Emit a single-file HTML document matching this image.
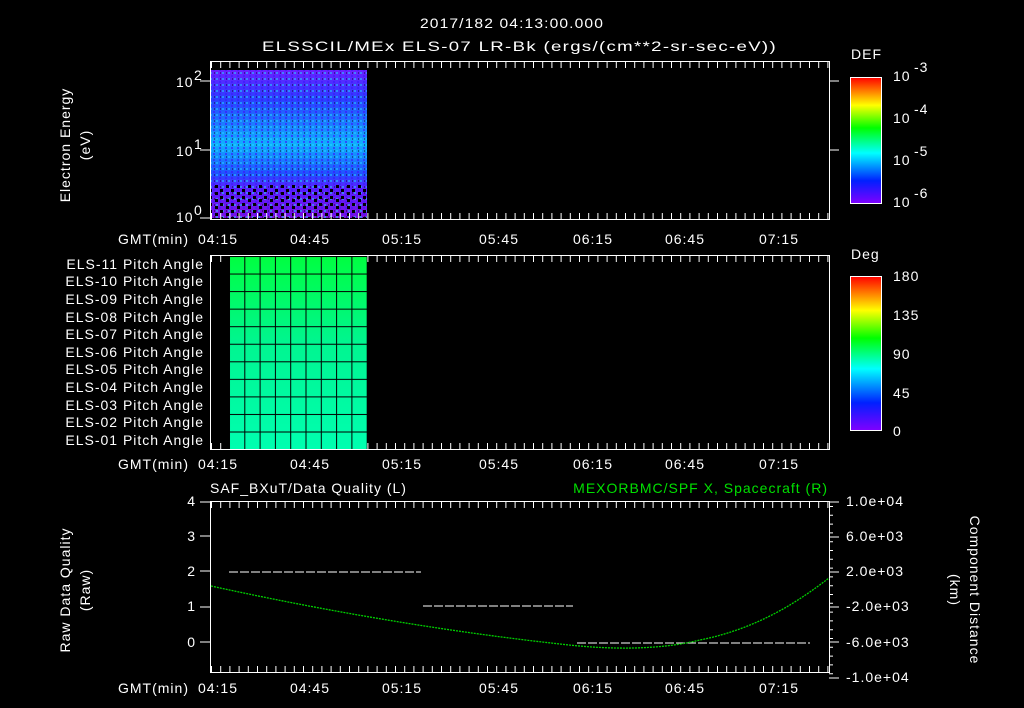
<!DOCTYPE html>
<html><head><meta charset="utf-8"><style>
html,body{margin:0;padding:0;background:#000;}
svg{display:block}
text{font-family:"Liberation Sans",sans-serif;fill:#fff;font-size:14px;letter-spacing:1px}
</style></head><body>
<svg width="1024" height="708" viewBox="0 0 1024 708" xmlns="http://www.w3.org/2000/svg">
<defs>
<linearGradient id="spec" x1="0" y1="0" x2="0" y2="1">
<stop offset="0" stop-color="#6a1fff"/><stop offset="0.2" stop-color="#2a40ff"/>
<stop offset="0.5" stop-color="#10b0ff"/><stop offset="0.7" stop-color="#2050ff"/>
<stop offset="0.8" stop-color="#5a20ff"/><stop offset="1" stop-color="#7a10e0"/>
</linearGradient>
<linearGradient id="cb1" x1="0" y1="0" x2="0" y2="1">
<stop offset="0" stop-color="#ff0000"/><stop offset="0.22" stop-color="#ffff00"/>
<stop offset="0.4" stop-color="#00ff00"/><stop offset="0.6" stop-color="#00ffff"/>
<stop offset="0.82" stop-color="#0020ff"/><stop offset="1" stop-color="#8000ff"/>
</linearGradient>
<linearGradient id="pa" x1="0" y1="0" x2="0" y2="1">
<stop offset="0" stop-color="#00ff40"/><stop offset="0.45" stop-color="#00f590"/><stop offset="1" stop-color="#00ffb0"/>
</linearGradient>
<pattern id="noise" width="6" height="6" patternUnits="userSpaceOnUse">
<rect x="0" y="0" width="2" height="2" fill="#20e0ff" opacity=".5"/><rect x="3" y="3" width="2" height="2" fill="#4010ff" opacity=".6"/><rect x="4" y="0" width="1" height="2" fill="#000" opacity=".4"/>
</pattern>
<pattern id="blk" width="11" height="7" patternUnits="userSpaceOnUse">
<rect x="0" y="0" width="3" height="3" fill="#000"/><rect x="6" y="3" width="3" height="3" fill="#000"/>
</pattern>
<pattern id="grid" width="15.3" height="17.55" patternUnits="userSpaceOnUse" x="229" y="256">
<rect x="0" y="0" width="15.3" height="1" fill="#000"/><rect x="0" y="0" width="1" height="17.55" fill="#000"/>
</pattern>
</defs>

<text x="512" y="28" text-anchor="middle" font-size="16" textLength="184" lengthAdjust="spacingAndGlyphs">2017/182 04:13:00.000</text>
<text x="262" y="51" font-size="16" textLength="515" lengthAdjust="spacingAndGlyphs">ELSSCIL/MEx ELS-07 LR-Bk  (ergs/(cm**2-sr-sec-eV))</text>

<!-- panel 1 -->
<rect x="211" y="70" width="156" height="148" fill="url(#spec)"/>
<rect x="211" y="70" width="156" height="148" fill="url(#noise)"/>
<rect x="211" y="185" width="156" height="33" fill="url(#blk)"/>
<rect x="210.5" y="61.5" width="619" height="158" fill="none" stroke="#fff"/>
<g stroke="#fff" stroke-width="6" stroke-dasharray="1,8.2">
<line x1="211" y1="65" x2="829" y2="65"/><line x1="211" y1="216" x2="829" y2="216"/>
<line x1="211" y1="259" x2="829" y2="259"/><line x1="211" y1="446" x2="829" y2="446"/>
<line x1="211" y1="505" x2="829" y2="505"/><line x1="211" y1="669" x2="829" y2="669"/>
</g>
<g stroke="#fff">
<line x1="200" y1="81" x2="210" y2="81"/><line x1="200" y1="150" x2="210" y2="150"/><line x1="200" y1="218" x2="210" y2="218"/>
<line x1="829" y1="81" x2="839" y2="81"/><line x1="829" y1="150" x2="839" y2="150"/>
</g>
<text x="176" y="87">10</text><text x="194" y="80" font-size="9">2</text>
<text x="176" y="156">10</text><text x="194" y="149" font-size="9">1</text>
<text x="176" y="222">10</text><text x="194" y="215" font-size="9">0</text>
<text transform="translate(70,145) rotate(-90)" text-anchor="middle">Electron Energy</text>
<text transform="translate(90,145) rotate(-90)" text-anchor="middle">(eV)</text>
<text x="851" y="59" font-size="16">DEF</text>
<rect x="850.5" y="77.5" width="31" height="126" fill="url(#cb1)" stroke="#fff"/>
<text x="893" y="81" font-size="17">10</text><text x="914" y="72" font-size="11">-3</text>
<text x="893" y="123" font-size="17">10</text><text x="914" y="114" font-size="11">-4</text>
<text x="893" y="165" font-size="17">10</text><text x="914" y="156" font-size="11">-5</text>
<text x="893" y="207" font-size="17">10</text><text x="914" y="198" font-size="11">-6</text>

<g id="tl">
<text x="118" y="244">GMT(min)</text>
<text x="218" y="244" text-anchor="middle">04:15</text><text x="310" y="244" text-anchor="middle">04:45</text>
<text x="402" y="244" text-anchor="middle">05:15</text><text x="499" y="244" text-anchor="middle">05:45</text>
<text x="593" y="244" text-anchor="middle">06:15</text><text x="685" y="244" text-anchor="middle">06:45</text>
<text x="779" y="244" text-anchor="middle">07:15</text>
</g>

<!-- panel 2 -->
<rect x="229" y="256" width="138" height="193" fill="url(#pa)"/>
<rect x="229" y="256" width="138" height="193" fill="url(#grid)"/>
<rect x="210.5" y="255.5" width="619" height="194" fill="none" stroke="#fff"/>
<g text-anchor="end" font-size="13">
<text x="204" y="269">ELS-11 Pitch Angle</text><text x="204" y="286">ELS-10 Pitch Angle</text>
<text x="204" y="304">ELS-09 Pitch Angle</text><text x="204" y="322">ELS-08 Pitch Angle</text>
<text x="204" y="339">ELS-07 Pitch Angle</text><text x="204" y="357">ELS-06 Pitch Angle</text>
<text x="204" y="374">ELS-05 Pitch Angle</text><text x="204" y="392">ELS-04 Pitch Angle</text>
<text x="204" y="410">ELS-03 Pitch Angle</text><text x="204" y="427">ELS-02 Pitch Angle</text>
<text x="204" y="445">ELS-01 Pitch Angle</text>
</g>
<text x="851" y="259" font-size="16">Deg</text>
<rect x="850.5" y="276.5" width="31" height="154" fill="url(#cb1)" stroke="#fff"/>
<g font-size="17"><text x="893" y="281">180</text><text x="893" y="320">135</text><text x="893" y="359">90</text><text x="893" y="398">45</text><text x="893" y="436">0</text></g>
<use href="#tl" y="225"/>

<!-- panel 3 -->
<text x="210" y="493" font-size="15">SAF_BXuT/Data Quality (L)</text>
<text x="828" y="493" font-size="15" text-anchor="end" style="fill:#00e000">MEXORBMC/SPF X, Spacecraft (R)</text>
<rect x="210.5" y="501.5" width="619" height="171" fill="none" stroke="#fff"/>
<g stroke="#fff">
<line x1="200" y1="502" x2="210" y2="502"/><line x1="200" y1="536" x2="210" y2="536"/><line x1="200" y1="571" x2="210" y2="571"/><line x1="200" y1="607" x2="210" y2="607"/><line x1="200" y1="642" x2="210" y2="642"/>
</g>
<g stroke="#fff" stroke-width="1">
<line x1="829" y1="502" x2="839" y2="502"/><line x1="829" y1="537" x2="839" y2="537"/><line x1="829" y1="572" x2="839" y2="572"/><line x1="829" y1="607" x2="839" y2="607"/><line x1="829" y1="642" x2="839" y2="642"/><line x1="829" y1="678" x2="839" y2="678"/>
</g>
<g stroke="#fff" stroke-width="4" stroke-dasharray="1,7.8"><line x1="831" y1="506" x2="831" y2="678"/></g>
<g text-anchor="end"><text x="196" y="506">4</text><text x="196" y="541">3</text><text x="196" y="576">2</text><text x="196" y="611">1</text><text x="196" y="647">0</text></g>
<g font-size="13"><text x="846" y="506">1.0e+04</text><text x="846" y="541">6.0e+03</text><text x="846" y="576">2.0e+03</text><text x="846" y="611">-2.0e+03</text><text x="846" y="647">-6.0e+03</text><text x="846" y="682">-1.0e+04</text></g>
<text transform="translate(70,590) rotate(-90)" text-anchor="middle">Raw Data Quality</text>
<text transform="translate(90,590) rotate(-90)" text-anchor="middle">(Raw)</text>
<text transform="translate(970,590) rotate(90)" text-anchor="middle" font-size="15">Component Distance</text>
<text transform="translate(950,590) rotate(90)" text-anchor="middle" font-size="15">(km)</text>
<g stroke="#fff" stroke-dasharray="9,2">
<line x1="229" y1="572" x2="421" y2="572"/><line x1="423" y1="606" x2="573" y2="606"/><line x1="577" y1="643" x2="810" y2="643"/>
</g>
<path d="M211 586 C 330 612, 450 632, 560 644 C 610 650, 660 650, 700 640 C 760 628, 800 600, 829 578" fill="none" stroke="#00d000" stroke-width="1.3" stroke-dasharray="2,1"/>
<use href="#tl" y="449"/>
</svg>
</body></html>
